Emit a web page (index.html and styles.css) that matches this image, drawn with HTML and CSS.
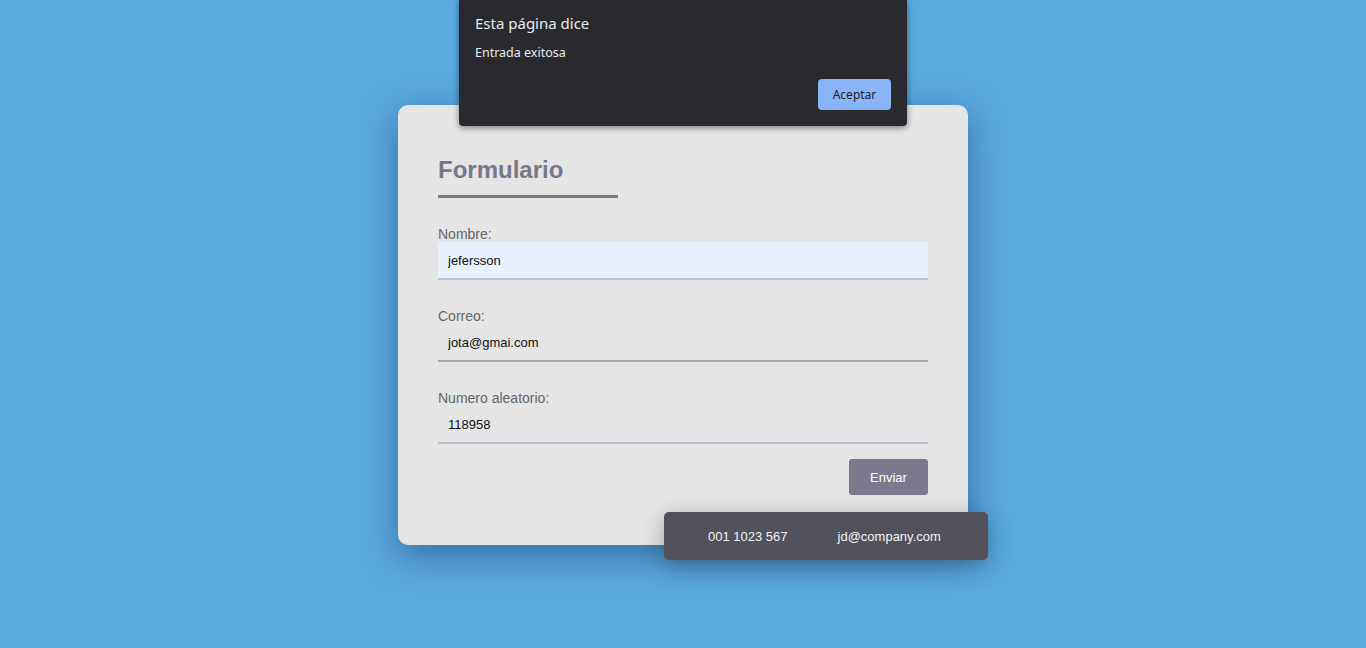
FILE: index.html
```html
<!DOCTYPE html>
<html lang="es">
<head>
<meta charset="utf-8">
<title>Formulario</title>
<link rel="stylesheet" href="styles.css">
</head>
<body>
<div class="stage">
  <form class="card">
    <h2 class="title">Formulario</h2>
    <div class="group">
      <label class="label">Nombre:</label>
      <input class="field autofill" type="text" value="jefersson">
    </div>
    <div class="group">
      <label class="label">Correo:</label>
      <input class="field focused" type="text" value="jota@gmai.com">
    </div>
    <div class="group">
      <label class="label">Numero aleatorio:</label>
      <input class="field" type="text" value="118958">
    </div>
    <div class="actions">
      <button class="send" type="button">Enviar</button>
    </div>
    <div class="contact">
      <span>001 1023 567</span>
      <span>jd@company.com</span>
    </div>
  </form>
</div>
<div class="dialog">
  <div class="dialog-title">Esta página dice</div>
  <div class="dialog-msg">Entrada exitosa</div>
  <div class="dialog-actions">
    <button class="accept" type="button">Aceptar</button>
  </div>
</div>
</body>
</html>
```
FILE: styles.css
```css
html, body {
  margin: 0;
  padding: 0;
}
body {
  background: #5aa9e1;
  width: 1366px;
  height: 648px;
  overflow: hidden;
  font-family: "Liberation Sans", Arial, sans-serif;
  position: relative;
}
.stage {
  display: flex;
  justify-content: center;
  padding-top: 105px;
}
.card {
  position: relative;
  width: 570px;
  box-sizing: border-box;
  padding: 50px 40px 50px;
  background: #e5e5e5;
  border-radius: 10px;
  box-shadow: 0 10px 34px rgba(20, 50, 90, 0.5);
}
.title {
  margin: 0 0 28px;
  width: 180px;
  font-size: 24px;
  line-height: 30px;
  font-weight: bold;
  color: #77778a;
  padding-bottom: 10px;
  border-bottom: 3px solid #7a7a8c;
}
.group + .group {
  margin-top: 28px;
}
.label {
  display: block;
  font-size: 14px;
  line-height: 16px;
  color: #666;
}
.field {
  display: block;
  width: 100%;
  height: 38px;
  box-sizing: border-box;
  margin: 0;
  padding: 0 10px;
  border: none;
  border-bottom: 2px solid #bdbed2;
  background: transparent;
  font-family: "Liberation Sans", Arial, sans-serif;
  font-size: 13px;
  color: #111;
  outline: none;
}
.field.autofill {
  background: #e8f0fe;
}
.field.focused {
  border-bottom-color: #a4a4b6;
}
.actions {
  display: flex;
  justify-content: flex-end;
  margin-top: 15px;
}
.send {
  width: 79px;
  height: 36px;
  border: none;
  border-radius: 3px;
  background: #7a7a8c;
  color: #fff;
  font-family: "Liberation Sans", Arial, sans-serif;
  font-size: 13px;
}
.contact {
  position: absolute;
  right: -20px;
  bottom: -15px;
  width: 324px;
  height: 48px;
  box-sizing: border-box;
  display: flex;
  align-items: center;
  gap: 50px;
  padding: 0 44px;
  background: #52525c;
  border-radius: 5px;
  color: #f2f2f2;
  font-size: 13px;
  box-shadow: 0 6px 24px rgba(0, 0, 0, 0.3);
}
.dialog {
  position: absolute;
  top: 0;
  left: 459px;
  width: 448px;
  height: 126px;
  box-sizing: border-box;
  padding: 13px 16px 16px;
  background: #292a2e;
  border-radius: 0 0 4px 4px;
  box-shadow: 0 2px 6px rgba(0, 0, 0, 0.45);
  font-family: "Noto Sans", "Open Sans", sans-serif;
  color: #e8eaed;
}
.dialog-title {
  font-size: 15px;
  line-height: 20px;
}
.dialog-msg {
  margin-top: 12px;
  font-size: 12.5px;
  line-height: 16px;
}
.dialog-actions {
  display: flex;
  justify-content: flex-end;
  margin-top: 18px;
}
.accept {
  width: 73px;
  height: 31px;
  border: none;
  border-radius: 4px;
  background: #8ab4f8;
  color: #202124;
  font-family: "Noto Sans", "Open Sans", sans-serif;
  font-size: 12px;
}
```
